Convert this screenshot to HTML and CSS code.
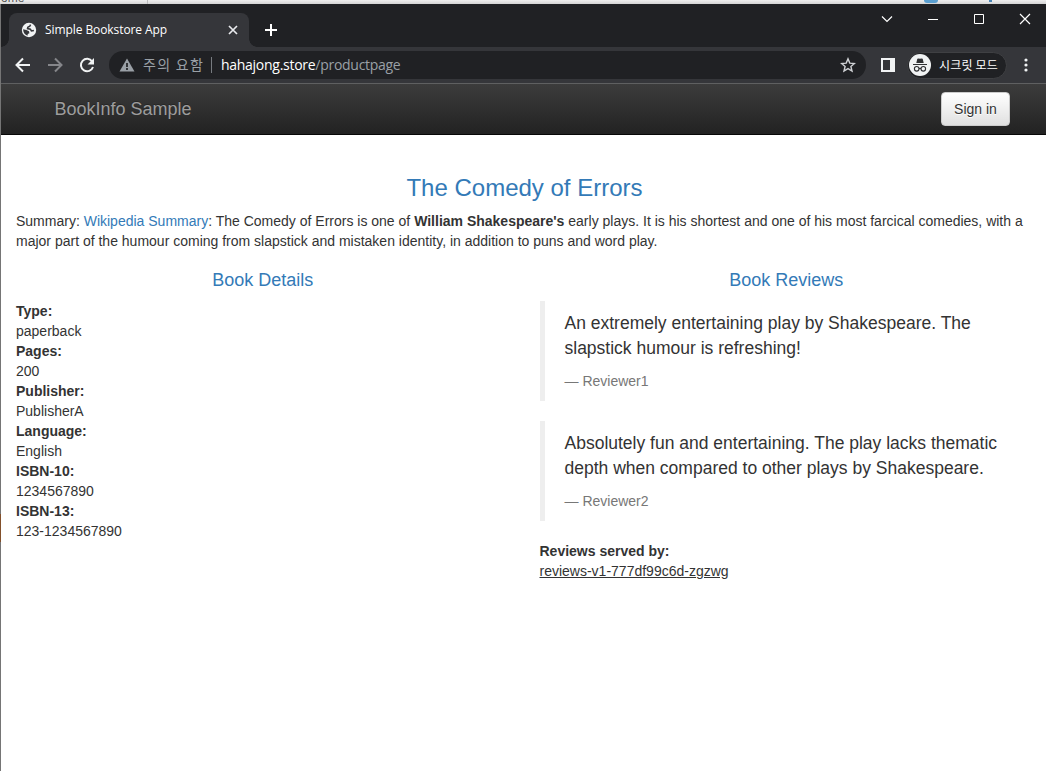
FILE: index.html
```html
<!DOCTYPE html>
<html lang="en">
<head>
<meta charset="utf-8">
<title>Simple Bookstore App</title>
<link rel="stylesheet" href="styles.css">
</head>
<body>
<div class="backdrop"><span class="behind-home">ome</span><i class="behind-line"></i><i class="behind-badge"></i><i class="behind-mark"></i></div>
<div class="shell">
<div class="edge"></div>
<div class="window">
  <header class="tabstrip">
    <div class="tab">
      <svg class="globe" width="16" height="16" viewBox="0 0 16 16"><circle cx="8" cy="8" r="7.2" fill="#f1f3f4"/><path d="M9.600 2.600L8.800 4.300 6.800 5.200 6.500 6.600 9.400 7.200 10.400 8.900 12.900 8.500" fill="none" stroke="#35363a" stroke-width="1.500"/><path d="M2.100 7.300l3.300.8 2.600 1.200.4 1.900-1.600.8-.3 1.700C4 13 2.100 10.500 2.100 7.300z" fill="#35363a"/></svg>
      <span class="tab-title">Simple Bookstore App</span>
      <svg class="tab-close" width="10" height="10" viewBox="0 0 10 10"><path d="M1 1l8 8M9 1L1 9" stroke="#e8eaed" stroke-width="1.7"/></svg>
    </div>
    <svg class="new-tab" width="14" height="14" viewBox="0 0 14 14"><path d="M7 1v12M1 7h12" stroke="#fff" stroke-width="2"/></svg>
    <div class="controls">
      <svg width="46" height="30" viewBox="0 0 46 30"><path d="M18 12.500l5 5 5-5" fill="none" stroke="#fff" stroke-width="1.200"/></svg>
      <svg width="46" height="30" viewBox="0 0 46 30"><path d="M18 15.500h10" stroke="#fff"/></svg>
      <svg width="46" height="30" viewBox="0 0 46 30"><path d="M18.500 10.500h9v9h-9z" fill="none" stroke="#fff"/></svg>
      <svg width="46" height="30" viewBox="0 0 46 30"><path d="M18 10l10 10M28 10L18 20" stroke="#fff" stroke-width="1.200"/></svg>
    </div>
  </header>
  <div class="toolbar">
    <svg class="nav-icon" width="16" height="16" viewBox="0 0 16 16"><path d="M15 8H2M8 1.500L1.500 8 8 14.500" fill="none" stroke="#f1f3f4" stroke-width="2"/></svg>
    <svg class="nav-icon" width="16" height="16" viewBox="0 0 16 16"><path d="M1 8h13M8 1.500L14.500 8 8 14.500" fill="none" stroke="#85868a" stroke-width="2"/></svg>
    <svg class="nav-icon" width="16" height="16" viewBox="0 0 16 16"><path d="M13.200 4.500A6.200 6.200 0 1 0 14 10" fill="none" stroke="#f1f3f4" stroke-width="2"/><path d="M15 1v6.500H8.500z" fill="#f1f3f4"/></svg>
    <div class="omnibox">
      <svg class="warn" width="16" height="14" viewBox="0 0 16 14"><path d="M8 .5L15.500 13.500H.5z" fill="#9aa0a6"/><path d="M8 5v4M8 10v2" stroke="#202124" stroke-width="1.700"/></svg>
      <span class="caution">주의 요함</span><i class="divider"></i>
      <span class="url">hahajong.store<span class="path">/productpage</span></span>
      <svg class="star" width="16" height="16" viewBox="0 0 16 16"><path d="M8 1.900l1.800 4.200 4.600.4-3.500 3 1.100 4.500L8 11.600 4 14l1.100-4.500-3.500-3 4.600-.4z" fill="none" stroke="#d0d2d5" stroke-width="1.400"/></svg>
    </div>
    <svg class="panel" width="14" height="14" viewBox="0 0 14 14"><path d="M0 0h14v14H0zM2 2v10h7V2z" fill="#f1f3f4" fill-rule="evenodd"/></svg>
    <div class="incognito">
      <svg width="22" height="22" viewBox="0 0 22 22"><circle cx="11" cy="11" r="11" fill="#f1f3f4"/><path d="M7.300 9l1-4.300 1.400-.3 1.300.4 1.300-.4 1.400.3 1 4.300z" fill="#303134"/><path d="M4 10.500h14" stroke="#303134"/><g fill="none" stroke="#303134" stroke-width="1.100"><circle cx="7.700" cy="14.800" r="2.300"/><circle cx="14.300" cy="14.800" r="2.300"/><path d="M10 14.700q1-.7 2 0"/></g></svg>
      <span>시크릿 모드</span>
    </div>
    <svg class="more" width="4" height="14" viewBox="0 0 4 14"><g fill="#f1f3f4"><circle cx="2" cy="2" r="1.600"/><circle cx="2" cy="7" r="1.600"/><circle cx="2" cy="12" r="1.600"/></g></svg>
  </div>
  <nav class="navbar"><span class="brand">BookInfo Sample</span><button class="signin">Sign in</button></nav>
  <main class="page">
    <h3>The Comedy of Errors</h3>
    <p class="summary">Summary: <a>Wikipedia Summary</a>: The Comedy of Errors is one of <b>William Shakespeare's</b> early plays. It is his shortest and one of his most farcical comedies, with a<br>major part of the humour coming from slapstick and mistaken identity, in addition to puns and word play.</p>
    <div class="row">
      <section class="col">
        <h4>Book Details</h4>
        <dl>
          <dt>Type:</dt><dd>paperback</dd>
          <dt>Pages:</dt><dd>200</dd>
          <dt>Publisher:</dt><dd>PublisherA</dd>
          <dt>Language:</dt><dd>English</dd>
          <dt>ISBN-10:</dt><dd>1234567890</dd>
          <dt>ISBN-13:</dt><dd>123-1234567890</dd>
        </dl>
      </section>
      <section class="col">
        <h4>Book Reviews</h4>
        <blockquote><p>An extremely entertaining play by Shakespeare. The<br>slapstick humour is refreshing!</p><small>— Reviewer1</small></blockquote>
        <blockquote><p>Absolutely fun and entertaining. The play lacks thematic<br>depth when compared to other plays by Shakespeare.</p><small>— Reviewer2</small></blockquote>
        <dl><dt>Reviews served by:</dt><dd><u>reviews-v1-777df99c6d-zgzwg</u></dd></dl>
      </section>
    </div>
  </main>
</div>
</div>
</body>
</html>
```
FILE: styles.css
```css
* { box-sizing: border-box; }
body { margin: 0; width: 1046px; height: 771px; overflow: hidden; background: #fff; color: #333; font: 14px/20px "Liberation Sans", Arial, sans-serif; }
svg { display: block; flex: none; }
.backdrop { position: relative; height: 4px; overflow: hidden; background: linear-gradient(#efefef, #d4d4d4); }
.behind-home { position: absolute; left: 1px; top: -9px; font-size: 12px; line-height: 14px; color: #555; }
.behind-line { position: absolute; left: 147px; top: 0; width: 1px; height: 4px; background: #bbb; }
.behind-badge { position: absolute; left: 924px; top: -8px; width: 14px; height: 11px; border-radius: 3px; background: #5a9fd0; }
.behind-mark { position: absolute; left: 989px; top: 0; width: 3px; height: 2px; background: #4a85b5; }
.shell { display: flex; height: 767px; }
.edge { flex: none; width: 1px; background: linear-gradient(#757575 0 510px, #82502b 510px 538px, #757575 538px); }
.window { flex: none; width: 1045px; overflow: hidden; }
.tabstrip { display: flex; height: 43px; padding-left: 8px; background: #202124; }
.tab { position: relative; display: flex; align-items: center; width: 240px; height: 34px; margin-top: 9px; padding: 0 11px 0 12px; border-radius: 8px 8px 0 0; background: #35363a; }
.tab::before, .tab::after { content: ""; position: absolute; bottom: 0; width: 8px; height: 8px; }
.tab::before { left: -8px; background: radial-gradient(circle at 0 0, #202124 7.5px, #35363a 8px); }
.tab::after { right: -8px; background: radial-gradient(circle at 100% 0, #202124 7.5px, #35363a 8px); }
.tab-title { margin-left: 8px; color: #fff; font: 12px/16px "Open Sans", "Noto Sans", sans-serif; letter-spacing: -.08px; white-space: nowrap; }
.tab-close { margin-left: auto; }
.new-tab { margin: 19px 0 0 15px; }
.controls { display: flex; margin-left: auto; margin-right: -2px; }
.toolbar { display: flex; align-items: center; height: 37px; padding-left: 14px; background: #35363a; border-bottom: 1px solid #5f6061; }
.nav-icon { margin-right: 16px; }
.omnibox { display: flex; align-items: center; width: 757px; height: 28px; margin-left: -2px; padding: 0 10px; border-radius: 14px; background: #202124; white-space: nowrap; }
.caution { width: 61px; margin-left: 8px; color: #9aa0a6; font: 14px/20px "Noto Sans CJK KR", sans-serif; letter-spacing: 1.3px; position: relative; top: -1px; }
.divider { width: 1px; height: 16px; margin: 0 9px 0 7px; background: #777b80; }
.url { color: #fff; font: 14px/20px "Open Sans", "Noto Sans", sans-serif; letter-spacing: -.28px; }
.path { color: #9aa0a6; }
.star { margin-left: auto; }
.panel { margin-left: 15px; }
.incognito { display: flex; align-items: center; gap: 8px; width: 100px; height: 27px; margin-left: 12px; padding-left: 1px; border: 1px solid #3f4043; border-radius: 14px; background: #202124; color: #fff; font: 12px/18px "Noto Sans CJK KR", sans-serif; letter-spacing: .2px; white-space: nowrap; }
.more { margin-left: 17px; }
.navbar { display: flex; align-items: center; justify-content: space-between; height: 51px; padding: 0 36px 1px 53.5px; background: linear-gradient(#3c3c3c, #222); border-bottom: 1px solid #080808; }
.brand { color: #9d9d9d; font-size: 18px; text-shadow: 0 -1px 0 rgba(0,0,0,.25); }
.signin { width: 69px; height: 34px; padding: 0; border: 1px solid #ccc; border-radius: 4px; background: linear-gradient(#fff, #e0e0e0); color: #333; font: 14px/20px "Liberation Sans", Arial, sans-serif; text-shadow: 0 1px 0 #fff; }
.page { width: 1047px; padding: 40px 15px 0; }
h3, h4 { margin: 0; color: #337ab7; font-weight: 400; text-align: center; }
h3 { font-size: 24px; line-height: 26px; }
h4 { font-size: 18px; line-height: 20px; margin-bottom: 11px; }
.summary { margin: 10px 0 19px; white-space: nowrap; }
a { color: #337ab7; }
.row { display: flex; margin: 0 -15px; }
.col { flex: 1; padding: 0 15px; }
dl, dd { margin: 0; }
dt, b { font-weight: 700; }
blockquote { margin: 0 0 20px; padding: 10px 20px; border-left: 5px solid #eee; font-size: 17.5px; line-height: 25px; white-space: nowrap; }
blockquote p { margin: 0 0 10px; }
small { display: block; color: #777; font-size: 14px; line-height: 20px; }
```
